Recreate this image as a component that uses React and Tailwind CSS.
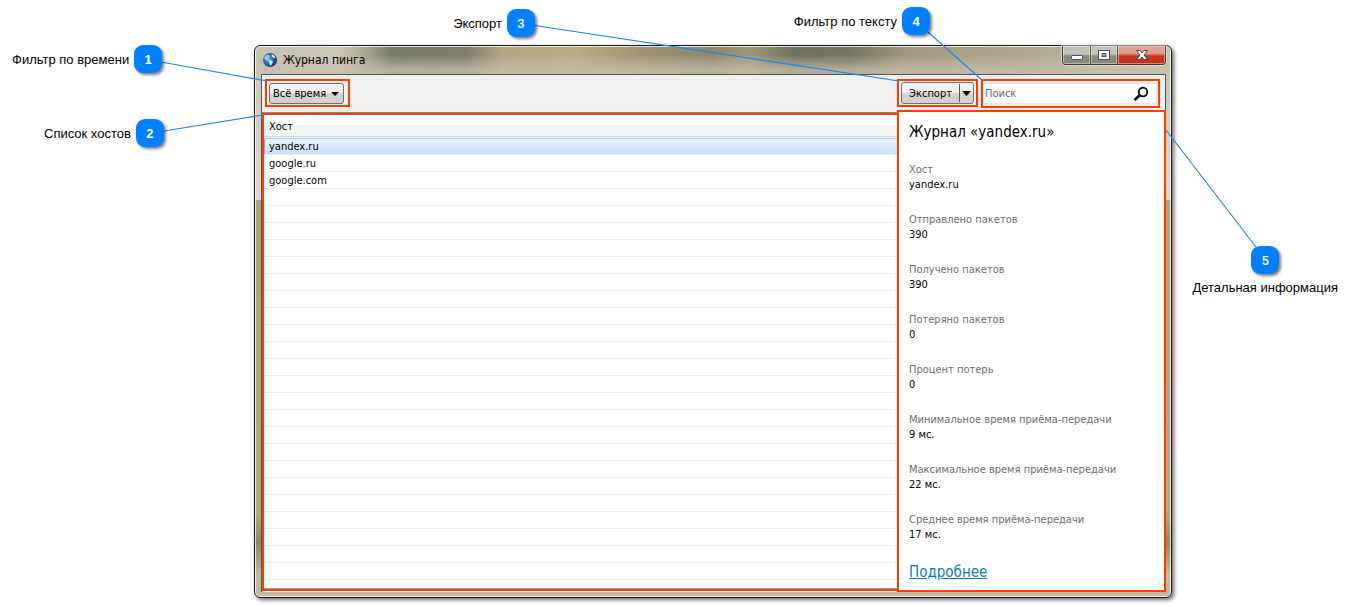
import React from "react";

const details = [
    { label: "Хост", value: "yandex.ru" },
    { label: "Отправлено пакетов", value: "390" },
    { label: "Получено пакетов", value: "390" },
    { label: "Потеряно пакетов", value: "0" },
    { label: "Процент потерь", value: "0" },
    { label: "Минимальное время приёма-передачи", value: "9 мс." },
    { label: "Максимальное время приёма-передачи", value: "22 мс." },
    { label: "Среднее время приёма-передачи", value: "17 мс." },
];

const hosts = ["yandex.ru", "google.ru", "google.com"];
const emptyRows = Array.from({ length: 23 });

const Badge = ({ light, children }) => (
    <span
        className={`flex h-7 w-7 shrink-0 items-center justify-center rounded-[9px] bg-[#0080ff] pt-px text-[13px] text-white shadow-[2px_2px_3px_rgba(0,0,0,0.5)] ${light ? "font-medium font-['Roboto',sans-serif]" : "font-bold"}`}
    >
        {children}
    </span>
);

const GlobeIcon = () => (
    <svg className="h-4 w-4" viewBox="0 0 16 16" aria-hidden="true">
        <defs>
            <radialGradient id="globe" cx="0.35" cy="0.4" r="0.7">
                <stop offset="0" stopColor="#5aa6e0" />
                <stop offset="0.55" stopColor="#2465a5" />
                <stop offset="1" stopColor="#0d2c50" />
            </radialGradient>
        </defs>
        <circle cx="8" cy="8" r="7" fill="url(#globe)" />
        <path d="M2 6.500C2.800 4.300 4.500 3 6.500 2.800L8 4.500 6.800 6l1 .8-1.600 1.700L5 8.800 3.500 7.500z" fill="#9ccbec" />
        <path d="m7.500 8.200 2.500.3 1 1.500-1.700 3-1.300.4-.6-2.600-1-1.200z" fill="#cfeaf8" />
        <path d="m9.500 2.200 2.700 1.300 1.300 2.200-1.800.3-1.700-1.600z" fill="#e8f3fa" />
    </svg>
);

const TitleBar = () => (
    <div className="flex h-7 items-start justify-between">
        <div className="flex h-7 items-center gap-[5px] pl-px text-[12px] text-black">
            <GlobeIcon />
            <h1>Журнал пинга</h1>
        </div>
        <div className="flex h-[19px] overflow-hidden rounded-b-[4px] border border-t-0 border-[#3c3b35] shadow-[0_0_0_1px_rgba(255,255,255,0.45)]">
            <button type="button" aria-label="Свернуть" className="flex w-7 items-center justify-center border-r border-[#55544c] bg-linear-to-b from-[#c4c3b8] from-45% to-[#8b8979] to-55% shadow-[inset_0_0_0_1px_rgba(255,255,255,0.4)]">
                <svg className="h-3 w-3" viewBox="0 0 12 12">
                    <rect x="0.5" y="6.5" width="11" height="4" rx="1" fill="#fff" stroke="#4a4a58" />
                </svg>
            </button>
            <button type="button" aria-label="Развернуть" className="flex w-[27px] items-center justify-center border-r border-[#55544c] bg-linear-to-b from-[#c4c3b8] from-45% to-[#8b8979] to-55% shadow-[inset_0_0_0_1px_rgba(255,255,255,0.4)]">
                <svg className="h-3 w-3" viewBox="0 0 12 12">
                    <path d="M.5 1.500h11v9H.5zM4 4.500v3h4v-3z" fill="#fff" fillRule="evenodd" stroke="#4a4a58" />
                </svg>
            </button>
            <button type="button" aria-label="Закрыть" className="flex w-[47px] items-center justify-center bg-linear-to-b from-[#dfa091] from-40% to-[#c4351c] to-55% shadow-[inset_0_0_0_1px_rgba(255,255,255,0.4)]">
                <svg className="h-3 w-3" viewBox="0 0 12 12">
                    <path d="M.5 1.500h3.400L6 3.900l2.100-2.400h3.400L8 6l3.500 4.500H8.100L6 8.100l-2.100 2.400H.5L4 6z" fill="#fff" stroke="#4a4a58" strokeLinejoin="round" />
                </svg>
            </button>
        </div>
    </div>
);

const Toolbar = () => (
    <div className="flex h-[35px] items-start justify-between border-r border-[#55544c] bg-[#f0f0f0] pl-[3px] pr-[5px] pt-1">
        <div className="h-7 w-[85px] border-2 border-[#ff3c00] p-[2px]">
            <button type="button" className="flex h-[21px] w-[75px] items-center justify-between rounded-[3px] border border-[#707070] bg-linear-to-b from-[#f2f2f2] from-45% to-[#d2d2d2] to-55% pl-[3px] pr-1 pt-px text-[11px]">
                Всё время
                <svg className="h-1 w-2" viewBox="0 0 8 4">
                    <path d="M0 0h8L4 4z" />
                </svg>
            </button>
        </div>
        <div className="flex items-start gap-[3px]">
            <div className="h-7 w-[81px] border-2 border-[#ff3c00] py-px pl-[2px]">
                <div className="flex h-[22px] w-[73px] rounded-[3px] border border-[#707070] bg-linear-to-b from-[#f2f2f2] from-45% to-[#d2d2d2] to-55%">
                    <button type="button" className="flex-1 pt-[2px] text-[11px]">Экспорт</button>
                    <button type="button" aria-label="Параметры экспорта" className="my-px flex w-[14px] items-center justify-center border-l border-[#555]">
                        <svg className="h-[5px] w-[9px]" viewBox="0 0 9 5">
                            <path d="M0 0h9L4.500 5z" />
                        </svg>
                    </button>
                </div>
            </div>
            <label className="flex h-[29px] w-[179px] items-center border-2 border-[#ff3c00] bg-[#f0f0f0] py-[2px] pr-[2px]">
                <span className="flex h-[21px] flex-1 items-center border border-[#e3e9ef] bg-white pl-px pr-1">
                    <input type="search" aria-label="Поиск" placeholder="Поиск" className="w-full min-w-0 bg-transparent pt-px text-[11px] outline-none placeholder:text-[#6d6d6d]" />
                    <svg className="mr-[2px] h-4 w-4 shrink-0" viewBox="0 0 16 16" fill="none" stroke="#000">
                        <circle cx="10" cy="6" r="4.300" strokeWidth="1.700" />
                        <path d="m6.500 9.500-5 4.500" strokeWidth="2.600" />
                    </svg>
                </span>
            </label>
        </div>
    </div>
);

const HostList = () => (
    <div className="flex min-w-0 flex-1 flex-col bg-[#f0f0f0] pb-px pt-[2px]">
        <div className="flex-1 border-t border-[#828790]">
            <div className="h-full border-2 border-r-0 border-[#ff3c00] bg-white">
                <table className="w-full border-separate border-spacing-0 text-left text-[11px] leading-[14px]">
                    <thead>
                        <tr>
                            <th className="h-[22px] border-b border-[#d5d5d5] bg-linear-to-b from-white from-45% to-[#f4f5f7] to-50% pb-0 pl-[5px] pt-[2px] font-normal">Хост</th>
                        </tr>
                        <tr aria-hidden="true">
                            <td className="h-px p-0" />
                        </tr>
                    </thead>
                    <tbody>
                        {hosts.map((host, i) => (
                            <tr key={host}>
                                <td
                                    className={
                                        i === 0
                                            ? "h-[17px] rounded-l-[2px] border-y border-l border-y-[#a5c6ea] border-l-[#84acdd] border-b-[#e3edf8] bg-linear-to-b from-[#ebf3fd] to-[#c7dffc] pb-0 pl-1 pt-px"
                                            : "h-[17px] border-b border-[#ededed] pb-0 pl-[5px] pt-[2px]"
                                    }
                                >
                                    {host}
                                </td>
                            </tr>
                        ))}
                        {emptyRows.map((_, i) => (
                            <tr key={i}>
                                <td className="h-[17px] border-b border-[#ededed] p-0" />
                            </tr>
                        ))}
                    </tbody>
                </table>
                <div className="h-[9px] border-b border-[#a0a0a0]" />
            </div>
        </div>
    </div>
);

const Details = () => (
    <section className="w-[269px] shrink-0 border-2 border-[#ff3c00] bg-white px-[10px] pt-[10px]">
        <h2 className="text-[15px] leading-5 text-black">Журнал «yandex.ru»</h2>
        <dl className="mt-5 text-[11px] leading-[15px]">
            {details.map((item) => (
                <div key={item.label} className="mb-5">
                    <dt className="text-[#6d6d6d]">{item.label}</dt>
                    <dd className="text-black">{item.value}</dd>
                </div>
            ))}
        </dl>
        <a href="#more" className="block text-[15px] leading-5 text-[#0a7cb0] underline">
            Подробнее
        </a>
    </section>
);

const App = () => {
    return (
        <div className="relative min-h-screen min-w-[1000px] overflow-hidden bg-white pb-[9px] pl-[254px] pr-[180px] pt-[45px] font-['DejaVu_Sans_Condensed','DejaVu_Sans',sans-serif] text-black">
            {/* Application window */}
            <main className="rounded-[6px] border border-[#1c1c1c] pb-[5px] pl-[6px] pr-[5px] shadow-[2px_2px_4px_rgba(0,0,0,0.6),inset_0_0_0_1px_rgba(255,255,255,0.75)] [background:linear-gradient(to_bottom,transparent_30%,rgba(200,192,172,0.75)_85%)_0_0/100%_28px_no-repeat,linear-gradient(to_right,#c6c2b2,#cbc6b8_9%,#bbb5a3_11%,#777a69_15%,#7d7d6a_23%,#b3a682_27%,#b8ac86_35%,#a09470_42%,#8a866c_50%,#a19877_54%,#6d705d_59%,#74755f_65%,#a0987c_71%,#b0a98f_85%,#c9c5b5)_0_0/100%_28px_no-repeat,linear-gradient(to_bottom,#c6c1b0,#dedad0_28%,#b0a684_28%,#b3a98b_85%,#8f866c_90%,#c2baa2_96%)]">
                <TitleBar />
                <div className="border-l border-t border-[#55544c]">
                    <Toolbar />
                    <div className="flex">
                        <HostList />
                        <Details />
                    </div>
                </div>
            </main>

            {/* Leader lines */}
            <svg className="pointer-events-none absolute left-0 top-0 h-[160px] w-[300px]" viewBox="0 0 300 160" stroke="#1a87f5" strokeWidth="1.200">
                <path d="M161 62 267 81M164 131 263 115" />
            </svg>
            <svg className="pointer-events-none absolute right-0 top-0 h-[260px] w-[852px]" viewBox="500 0 852 260" stroke="#1a87f5" strokeWidth="1.200">
                <path d="M535 25.500 899 81M928 32 983 81M1166 130l90 117" />
            </svg>

            {/* Callouts */}
            <div className="font-['Liberation_Sans',Arial,sans-serif] text-[13px]">
                <div className="absolute left-3 top-[45px] flex items-center gap-[5px]">
                    <span className="pt-[2px]">Фильтр по времени</span>
                    <Badge>1</Badge>
                </div>
                <div className="absolute left-[44px] top-[119px] flex items-center gap-[5px]">
                    <span className="pt-[2px]">Список хостов</span>
                    <Badge>2</Badge>
                </div>
                <div className="absolute right-[817px] top-[9px] flex items-center gap-[5px]">
                    <span className="pt-[2px]">Экспорт</span>
                    <Badge light>3</Badge>
                </div>
                <div className="absolute right-[422px] top-[7px] flex items-center gap-[5px]">
                    <span className="pt-[2px]">Фильтр по тексту</span>
                    <Badge>4</Badge>
                </div>
                <div className="absolute right-[14px] top-[246px] flex flex-col items-center gap-1">
                    <Badge light>5</Badge>
                    <span>Детальная информация</span>
                </div>
            </div>
        </div>
    );
};

export default App;
